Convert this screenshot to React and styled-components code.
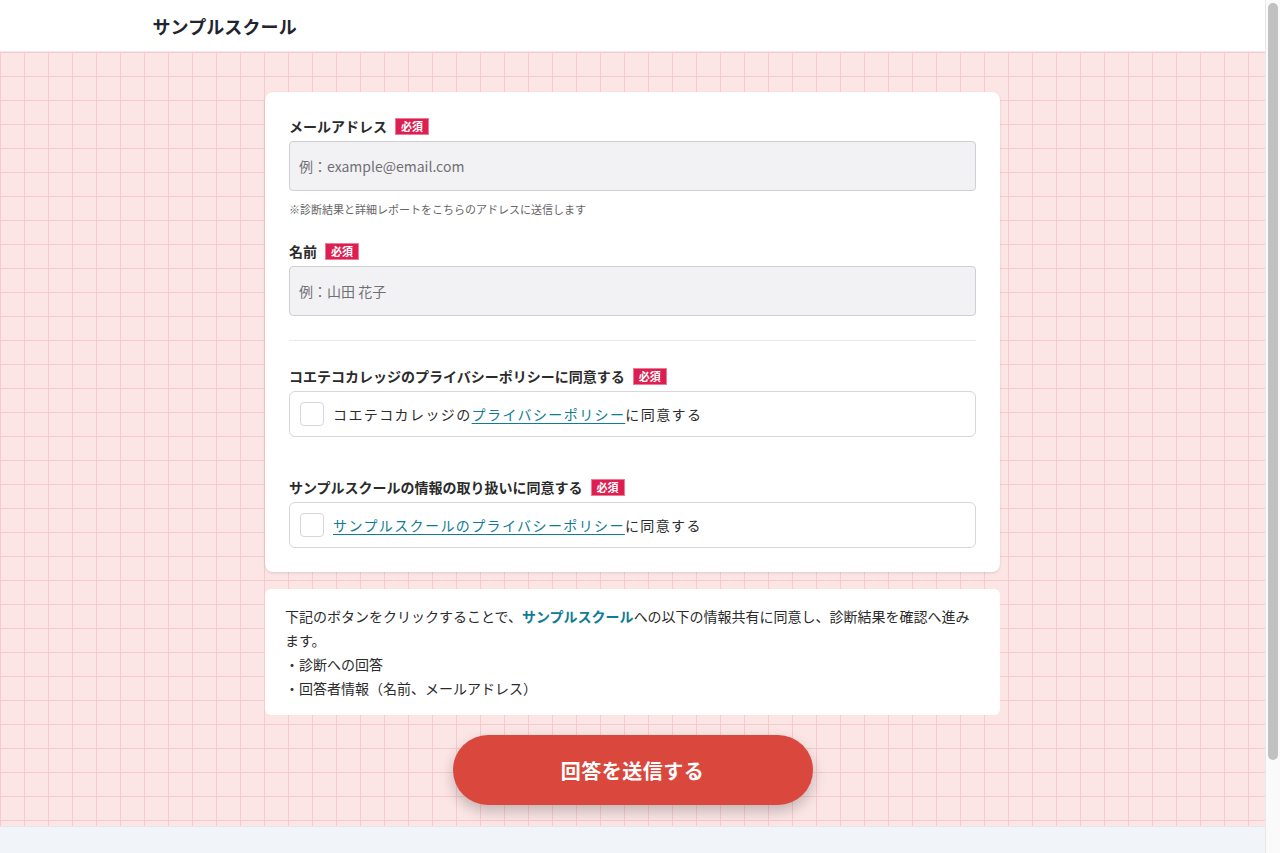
import styled, { createGlobalStyle } from "styled-components";

const GlobalStyle = createGlobalStyle`
  html, body {
    margin: 0;
    padding: 0;
  }
  body {
    font-family: "Noto Sans CJK JP", "Noto Sans", sans-serif;
    color: #333;
    background: #f1f4f8;
    padding-right: 15px;
  }
  * { box-sizing: border-box; }
`;

export default function App() {
  return (
    <>
      <GlobalStyle />
      <Header>
        <HeaderInner>
          <Logo>サンプルスクール</Logo>
        </HeaderInner>
      </Header>
      <Main>
        <Card>
          <Field>
            <Label>
              メールアドレス<Badge>必須</Badge>
            </Label>
            <Input placeholder="例：example@email.com" />
            <Note>※診断結果と詳細レポートをこちらのアドレスに送信します</Note>
          </Field>
          <Field $top={24}>
            <Label>
              名前<Badge>必須</Badge>
            </Label>
            <Input placeholder="例：山田 花子" />
          </Field>
          <Divider />
          <Field>
            <Label>
              コエテコカレッジのプライバシーポリシーに同意する<Badge>必須</Badge>
            </Label>
            <CheckRow>
              <Box type="checkbox" />
              <CheckText>
                コエテコカレッジの<Link href="#">プライバシーポリシー</Link>に同意する
              </CheckText>
            </CheckRow>
          </Field>
          <Field $top={40}>
            <Label>
              サンプルスクールの情報の取り扱いに同意する<Badge>必須</Badge>
            </Label>
            <CheckRow>
              <Box type="checkbox" />
              <CheckText>
                <Link href="#">サンプルスクールのプライバシーポリシー</Link>に同意する
              </CheckText>
            </CheckRow>
          </Field>
        </Card>
        <InfoCard>
          <p>
            下記のボタンをクリックすることで、<School>サンプルスクール</School>への以下の情報共有に同意し、診断結果を確認へ進みます。
          </p>
          <p>・診断への回答</p>
          <p>・回答者情報（名前、メールアドレス）</p>
        </InfoCard>
        <Submit type="button">回答を送信する</Submit>
      </Main>
      <Footer />
      <ScrollTrack>
        <ScrollThumb />
      </ScrollTrack>
    </>
  );
}

const Header = styled.header`
  background: #fff;
  height: 52px;
  border-bottom: 1px solid #ececec;
`;

const HeaderInner = styled.div`
  width: 960px;
  margin: 0 auto;
  height: 100%;
  display: flex;
  align-items: center;
`;

const Logo = styled.h1`
  margin: 0;
  font-size: 18px;
  font-weight: 700;
  color: #1f2430;
  letter-spacing: 0.1px;
`;

const Main = styled.main`
  background-color: #fbe5e5;
  background-image:
    linear-gradient(to right, #f8c9cd 1px, transparent 1px),
    linear-gradient(to bottom, #f8c9cd 1px, transparent 1px);
  background-size: 24px 24px;
  padding: 40px 0 21px;
  display: flex;
  flex-direction: column;
  align-items: center;
`;

const Card = styled.section`
  width: 735px;
  background: #fff;
  border-radius: 8px;
  padding: 24px 24px 24px;
  box-shadow: 0 1px 3px rgba(0, 0, 0, 0.12);
`;

const Field = styled.div`
  margin-top: ${(p) => (p.$top ? p.$top : 0)}px;
`;

const Label = styled.div`
  display: flex;
  align-items: center;
  font-size: 14px;
  font-weight: 700;
  color: #2b2b2b;
  line-height: 20px;
  margin-bottom: 5px;
`;

const Badge = styled.span`
  display: inline-flex;
  align-items: center;
  justify-content: center;
  margin-left: 8px;
  height: 17px;
  padding: 0 5px;
  background: #dc1e50;
  border: 1px solid #f07a95;
  color: #fff;
  font-size: 11px;
  font-weight: 700;
  line-height: 1;
`;

const Input = styled.input`
  display: block;
  width: 100%;
  height: 50px;
  padding: 0 9px;
  background: #f2f2f4;
  border: 1px solid #cfcfd3;
  border-radius: 4px;
  font-family: inherit;
  font-size: 14px;
  color: #333;
  &::placeholder {
    color: #6f6f74;
  }
`;

const Note = styled.p`
  margin: 10px 0 0;
  font-size: 11px;
  color: #666;
  line-height: 16px;
`;

const Divider = styled.hr`
  margin: 24px 0 25px;
  border: 0;
  border-top: 1px solid #e6e8eb;
`;

const CheckRow = styled.label`
  display: flex;
  align-items: center;
  gap: 9px;
  height: 46px;
  padding: 0 10px;
  border: 1px solid #d5d7dc;
  border-radius: 6px;
`;

const Box = styled.input`
  appearance: none;
  margin: 0;
  width: 24px;
  height: 24px;
  border: 1px solid #d5d7dc;
  border-radius: 4px;
  background: #fff;
  flex-shrink: 0;
`;

const CheckText = styled.span`
  font-size: 14px;
  letter-spacing: 1.4px;
  color: #2b2b2b;
`;

const Link = styled.a`
  color: #0e7c93;
  text-decoration: underline;
  text-underline-offset: 3px;
`;

const InfoCard = styled.section`
  width: 735px;
  margin-top: 17px;
  background: #fff;
  border-radius: 6px;
  padding: 15px 20px 15px;
  font-size: 14px;
  line-height: 24px;
  color: #2b2b2b;
  p {
    margin: 0;
  }
`;

const School = styled.strong`
  color: #0e7c93;
  font-weight: 700;
`;

const Submit = styled.button`
  margin-top: 20px;
  width: 360px;
  height: 70px;
  border: 0;
  border-radius: 35px;
  background: #d9473d;
  color: #fff;
  font-family: inherit;
  font-size: 20px;
  font-weight: 700;
  letter-spacing: 0.5px;
  box-shadow: 0 6px 14px rgba(0, 0, 0, 0.22);
  cursor: pointer;
`;

const Footer = styled.footer`
  height: 135px;
  background: #f1f4f8;
  border-top: 1px solid #e3e6ea;
`;

const ScrollTrack = styled.div`
  position: fixed;
  top: 0;
  right: 0;
  bottom: 0;
  width: 15px;
  background: #fafafa;
  border-left: 1px solid #e8e8e8;
  padding: 3px 2px 0 2px;
`;

const ScrollThumb = styled.div`
  height: 757px;
  border-radius: 5px;
  background: #c1c1c1;
`;
